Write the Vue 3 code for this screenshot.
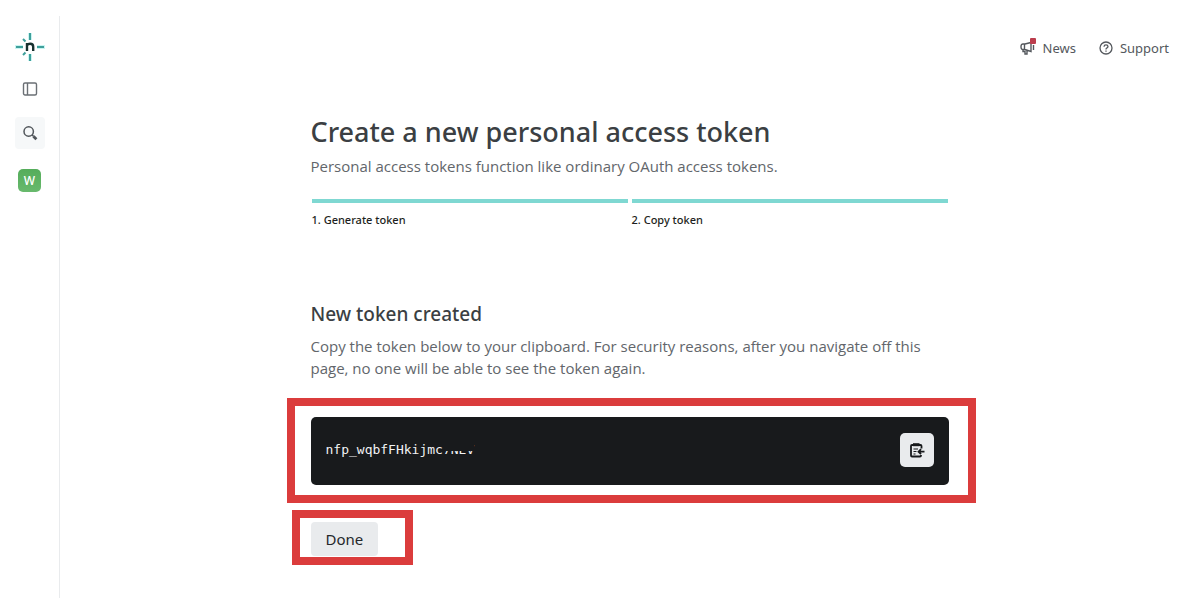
<script setup>
import { ref } from 'vue'

const steps = ['1. Generate token', '2. Copy token']
const token = ref('nfp_wqbfFHkijmc')
const tokenTail = ref('7NEV')

function copyToken() {
  navigator.clipboard?.writeText(token.value + tokenTail.value)
}
</script>

<template>
  <div class="shell">
    <nav class="sidebar" aria-label="Main">
      <a class="logo" href="#" aria-label="Home">
        <svg width="30" height="30" viewBox="0 0 30 30" fill="none">
          <g stroke="#c9f5f2" stroke-width="4">
            <path d="M15 1v7M15 22v7M0 15h8M22 15h8" />
          </g>
          <g stroke="#3f9f9b" stroke-width="2">
            <path d="M15 1v7M15 22v7M1 15h7M22 15h7M8 7l2.500 2.500M8 23l2.500-2.500" />
          </g>
          <path d="M12 19v-8M12 13.500q1-1.700 3.200-1.700q3 0 3 3V19" stroke="#17302f" stroke-width="2.400" />
        </svg>
      </a>
      <button class="icon-button" type="button" aria-label="Toggle sidebar">
        <svg width="16" height="16" viewBox="0 0 16 16" fill="none" stroke="#6b7075" stroke-width="1.400">
          <rect x="1.500" y="2" width="13" height="12" rx="1.500" />
          <path d="M5.500 2v12" />
        </svg>
      </button>
      <button class="icon-button search" type="button" aria-label="Search">
        <svg width="16" height="16" viewBox="0 0 16 16" fill="none" stroke="#50555a">
          <circle cx="6.700" cy="6.500" r="4.700" stroke-width="1.500" />
          <path d="M10 9.800l1.500 1.500" stroke-width="1.500" />
          <path d="M11.400 11.200l3 3" stroke-width="2.800" />
        </svg>
      </button>
      <a class="team" href="#">W</a>
    </nav>

    <div class="page">
      <header class="topbar">
        <a class="top-link" href="#">
          <span class="news-icon">
            <svg width="16" height="16" viewBox="0 0 16 16" fill="none" stroke="#54585d" stroke-width="1.400">
              <path d="M5 4H3Q1 4 1 6.800T3 9.500H5L11 11.500V2.500L5 4zM4.500 4v5.500M3 9.500v2h2V14h2v-4M13.500 5v5" />
            </svg>
            <span class="news-dot"></span>
          </span>
          News
        </a>
        <a class="top-link" href="#">
          <svg width="14" height="14" viewBox="0 0 14 14" fill="none" stroke="#54585d" stroke-width="1.300">
            <circle cx="7" cy="7" r="6" />
            <path d="M5 5.700Q5.100 3.900 7 3.900T9 5.600Q9 6.600 7.700 7.100Q7 7.400 7 8.400M7 9.400v1.300" />
          </svg>
          Support
        </a>
      </header>

      <main class="content">
        <h1>Create a new personal access token</h1>
        <p class="lead">Personal access tokens function like ordinary OAuth access tokens.</p>

        <ol class="steps">
          <li v-for="step in steps" :key="step">{{ step }}</li>
        </ol>

        <h2>New token created</h2>
        <p class="notice">
          Copy the token below to your clipboard. For security reasons, after you navigate off this
          page, no one will be able to see the token again.
        </p>

        <div class="highlight token-highlight">
          <div class="token-box">
            <code>{{ token }}<span class="masked">{{ tokenTail }}</span></code>
            <button class="copy" type="button" aria-label="Copy token" @click="copyToken">
              <svg width="16" height="16" viewBox="0 0 16 16" fill="none" stroke="#17191b" stroke-width="1.800">
                <path d="M4 3H3Q2 3 2 4v9.500q0 1 1 1h8q1 0 1-1V13M12.500 6.500V4q0-1-1-1H10" />
                <path d="M4 1.200h6.500v3H4z" fill="#17191b" stroke="none" />
                <path d="M4.500 7h4.500M4.500 9.500h3M4.500 12h2" stroke-width="1.200" />
                <path d="M15.500 9.700H10M12 7.200l-2.500 2.500 2.500 2.500" />
              </svg>
            </button>
          </div>
        </div>

        <div class="highlight done-highlight">
          <button class="done" type="button">Done</button>
        </div>
      </main>
    </div>
  </div>
</template>

<style>
body {
  background: #fff;
}
</style>

<style scoped>
* {
  box-sizing: border-box;
}

.shell {
  display: flex;
  min-height: 100vh;
  padding-top: 16px;
  font-family: "Noto Sans", "Open Sans", sans-serif;
  color: #3b3f43;
}

button {
  border: 0;
  padding: 0;
  font: inherit;
  cursor: pointer;
}

a {
  color: inherit;
  text-decoration: none;
}

svg {
  display: block;
}

.sidebar {
  display: flex;
  flex-direction: column;
  align-items: center;
  flex: 0 0 60px;
  padding-top: 16px;
  border-right: 1px solid #e9ebed;
}

.icon-button {
  display: grid;
  place-items: center;
  width: 30px;
  height: 32px;
  margin-top: 11px;
  border-radius: 4px;
  background: transparent;
}

.icon-button.search {
  margin-top: 12px;
  background: #f6f8f9;
}

.team {
  display: grid;
  place-items: center;
  width: 23px;
  height: 23px;
  margin-top: 20px;
  border-radius: 5px;
  background: linear-gradient(#55ad5b, #68b96d);
  color: #fff;
  font-size: 12px;
  font-weight: 500;
}

.page {
  flex: 1;
  min-width: 0;
}

.topbar {
  display: flex;
  justify-content: flex-end;
  gap: 23px;
  padding: 22px 30px 0;
}

.top-link {
  display: flex;
  align-items: center;
  gap: 7px;
  font-size: 13px;
  line-height: 20px;
  color: #54585d;
}

.news-icon {
  position: relative;
}

.news-dot {
  position: absolute;
  top: -2px;
  right: 0;
  width: 6px;
  height: 6px;
  border-radius: 1px;
  background: #bb3d4c;
}

.content {
  max-width: 638px;
  margin: 0 auto;
  padding: 56px 0 32px;
}

h1,
h2,
p,
ol {
  margin: 0;
}

h1 {
  font-size: 27px;
  line-height: 36px;
  font-weight: 500;
}

h2 {
  margin-top: 72px;
  font-size: 19px;
  line-height: 28px;
  font-weight: 500;
}

.lead,
.notice {
  font-family: "Open Sans", "Noto Sans", sans-serif;
  font-size: 15px;
  line-height: 22px;
  color: #62666b;
}

.lead {
  margin-top: 5px;
}

.notice {
  margin-top: 7px;
}

.steps {
  display: grid;
  grid-template-columns: 1fr 1fr;
  gap: 4px;
  margin-top: 22px;
  padding: 0 1px;
  list-style: none;
  font-size: 11px;
  line-height: 16px;
  font-weight: 500;
  color: #1d1f21;
}

.steps li {
  padding-top: 9px;
  border-top: 4px solid #7fd8d2;
}

.highlight {
  position: relative;
}

.highlight::after {
  content: "";
  position: absolute;
  border: 8px solid #db3c3c;
  pointer-events: none;
}

.token-highlight {
  margin-top: 38px;
}

.token-highlight::after {
  inset: -19px -27px -18px -24px;
}

.token-box {
  display: flex;
  align-items: center;
  justify-content: space-between;
  height: 68px;
  padding: 0 15px 3px;
  border-radius: 5px;
  background: #181a1c;
  color: #f2f3f4;
}

code {
  font-family: "DejaVu Sans Mono", "Liberation Mono", monospace;
  font-size: 13px;
  line-height: 20px;
}

.masked {
  position: relative;
}

.masked::after {
  content: "";
  position: absolute;
  inset: 0 0 6px;
  background: #181a1c;
}

.copy {
  display: grid;
  place-items: center;
  width: 34px;
  height: 34px;
  border-radius: 5px;
  background: #e9ebed;
}

.done-highlight {
  width: fit-content;
  margin-top: 37px;
}

.done-highlight::after {
  inset: -12px -35px -9px -19px;
}

.done {
  display: block;
  height: 34px;
  padding: 0 15px;
  border-radius: 4px;
  background: #e9ebed;
  color: #25282b;
  font-size: 15px;
  line-height: 34px;
}
</style>
